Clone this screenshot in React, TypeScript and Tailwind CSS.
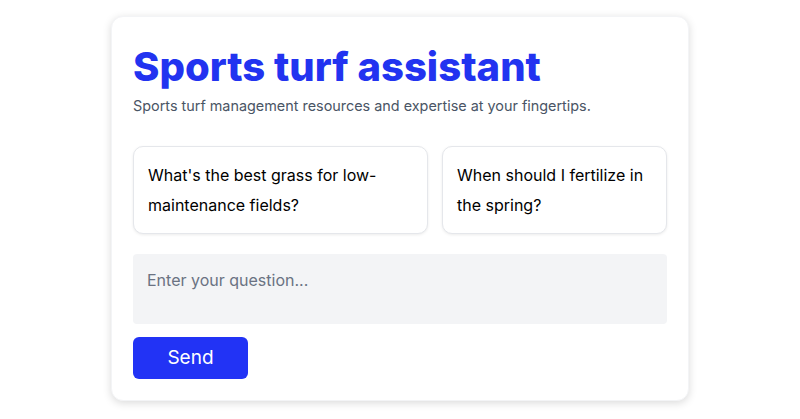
export default function App() {
  return (
    <div className="min-h-screen bg-white pt-4 font-['Inter',sans-serif]">
      <div className="mx-auto w-[578px] rounded-xl border border-gray-100 bg-white px-[21px] pt-[26px] pb-[21px] shadow-[0_2px_8px_rgba(0,0,0,0.15)]">
        <h1 className="text-[40px] leading-[48px] font-extrabold tracking-normal text-[#2233f0]">
          Sports turf assistant
        </h1>
        <p className="mt-[5px] text-[14.4px] leading-[20px] text-gray-600">
          Sports turf management resources and expertise at your fingertips.
        </p>

        <div className="mt-[30px] grid grid-cols-[295px_1fr] gap-[14px]">
          <button className="rounded-[10px] border border-gray-200 bg-white px-[14px] py-[13px] text-left text-[16px] leading-[30px] text-black shadow-[0_1px_3px_rgba(0,0,0,0.08)]">
            What's the best grass for low-maintenance fields?
          </button>
          <button className="rounded-[10px] border border-gray-200 bg-white px-[14px] py-[13px] text-left text-[16px] leading-[30px] text-black shadow-[0_1px_3px_rgba(0,0,0,0.08)]">
            When should I fertilize in the spring?
          </button>
        </div>

        <textarea
          placeholder="Enter your question..."
          className="mt-[20px] block h-[70px] w-full resize-none rounded bg-gray-100 px-[14px] py-[14px] text-[16px] placeholder:text-gray-500 focus:outline-none"
        />

        <button className="mt-[13px] h-[42px] w-[115px] rounded-md bg-[#2233f5] text-[19px] text-white">
          Send
        </button>
      </div>
    </div>
  );
}
